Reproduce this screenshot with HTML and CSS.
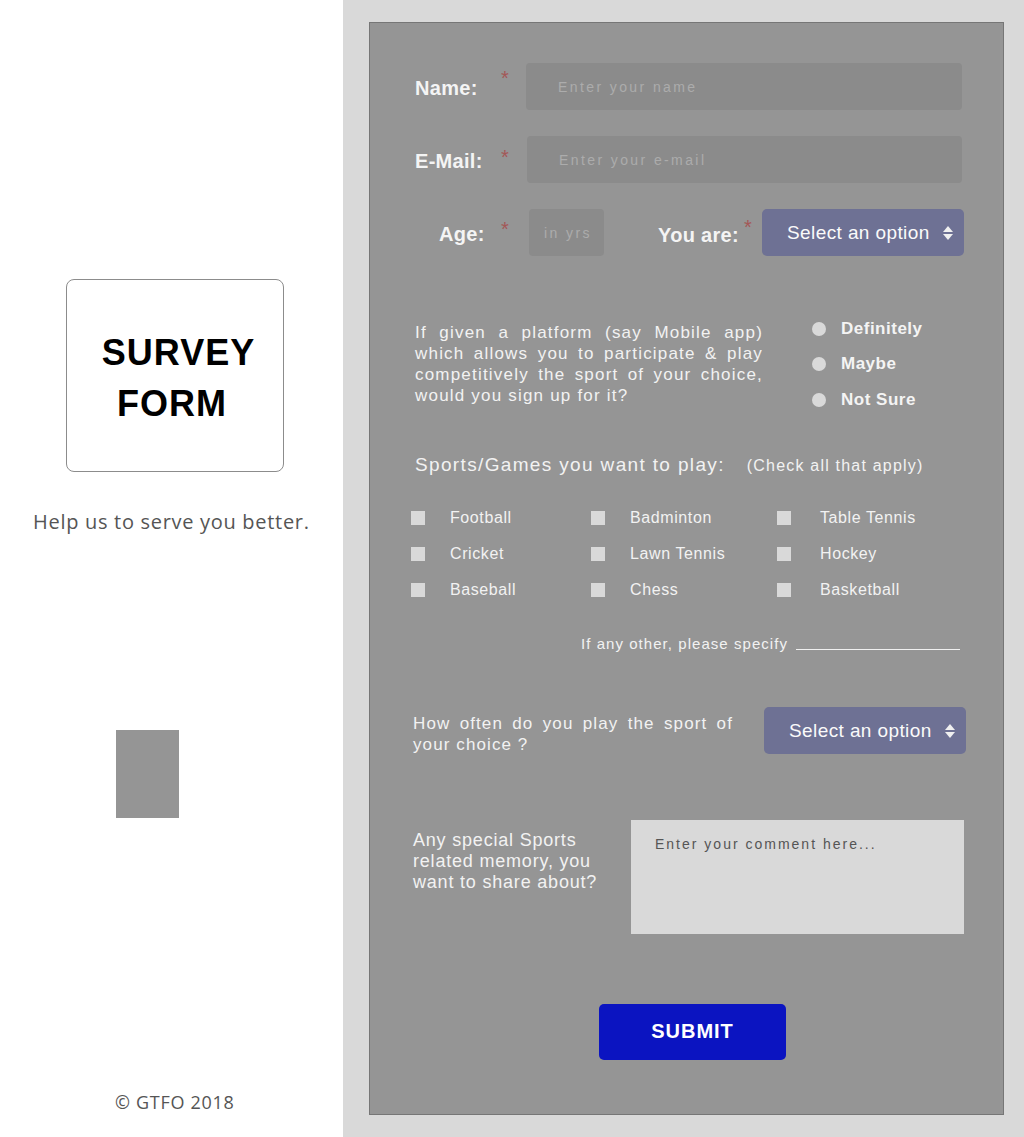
FILE: index.html
```html
<!DOCTYPE html>
<html lang="en">
<head>
<meta charset="utf-8">
<title>Survey Form</title>
<link rel="stylesheet" href="styles.css">
</head>
<body>
<div class="page">
  <aside class="side">
    <div class="title-box">
      <h1 class="title"><span class="t1">SURVEY</span><span class="t2">FORM</span></h1>
    </div>
    <p class="tagline">Help us to serve you better.</p>
    <div class="placeholder-img"></div>
    <p class="copy">© GTFO 2018</p>
  </aside>
  <main class="main">
    <form class="form">
      <div class="row row-name">
        <label class="lbl lbl-wide" for="name">Name:</label>
        <span class="star star-a">*</span>
        <input class="field field-name" id="name" type="text" placeholder="Enter your name">
      </div>
      <div class="row row-mail">
        <label class="lbl lbl-wide" for="email">E-Mail:</label>
        <span class="star star-a">*</span>
        <input class="field field-mail" id="email" type="email" placeholder="Enter your e-mail">
      </div>
      <div class="row row-age">
        <label class="lbl lbl-age" for="age">Age:</label>
        <span class="star star-b">*</span>
        <input class="field field-age" id="age" type="text" placeholder="in yrs">
        <label class="lbl lbl-you" for="you">You are:</label>
        <span class="star star-c">*</span>
        <div class="select-wrap">
          <select class="select" id="you"><option>Select an option</option></select>
          <span class="arrows"><span class="up"></span><span class="down"></span></span>
        </div>
      </div>

      <div class="question">
        <p class="qtext">If given a platform (say Mobile app) which allows you to participate &amp; play competitively the sport of your choice, would you sign up for it?</p>
        <div class="radios">
          <label class="radio"><input type="radio" name="signup"><span>Definitely</span></label>
          <label class="radio"><input type="radio" name="signup"><span>Maybe</span></label>
          <label class="radio"><input type="radio" name="signup"><span>Not Sure</span></label>
        </div>
      </div>

      <div class="sports-head">
        <span class="sh-main">Sports/Games you want to play:</span>
        <span class="sh-note">(Check all that apply)</span>
      </div>
      <div class="checks">
        <label class="check"><input type="checkbox"><span>Football</span></label>
        <label class="check"><input type="checkbox"><span>Badminton</span></label>
        <label class="check c3"><input type="checkbox"><span>Table Tennis</span></label>
        <label class="check"><input type="checkbox"><span>Cricket</span></label>
        <label class="check"><input type="checkbox"><span>Lawn Tennis</span></label>
        <label class="check c3"><input type="checkbox"><span>Hockey</span></label>
        <label class="check"><input type="checkbox"><span>Baseball</span></label>
        <label class="check"><input type="checkbox"><span>Chess</span></label>
        <label class="check c3"><input type="checkbox"><span>Basketball</span></label>
      </div>
      <div class="other">
        <label for="other">If any other, please specify</label>
        <input class="other-field" id="other" type="text">
      </div>

      <div class="freq">
        <p class="ftext">How often do you play the sport of your choice ?</p>
        <div class="select-wrap">
          <select class="select"><option>Select an option</option></select>
          <span class="arrows"><span class="up"></span><span class="down"></span></span>
        </div>
      </div>

      <div class="memory">
        <p class="mtext">Any special Sports related memory, you want to share about?</p>
        <textarea class="comment" placeholder="Enter your comment here..."></textarea>
      </div>

      <button class="submit" type="submit">SUBMIT</button>
    </form>
  </main>
</div>
</body>
</html>
```

FILE: styles.css
```css
* { box-sizing: border-box; }
html, body { margin: 0; padding: 0; }
body {
  font-family: "Liberation Sans", Arial, sans-serif;
  background: #ffffff;
}
.page {
  display: flex;
  width: 1024px;
  min-height: 1137px;
}
.side {
  width: 343px;
  flex: none;
  background: #ffffff;
  display: flex;
  flex-direction: column;
  align-items: flex-start;
  padding-top: 279px;
}
.title-box {
  margin-left: 66px;
  width: 218px;
  height: 193px;
  border: 1px solid #8c8c8c;
  border-radius: 8px;
  display: flex;
  align-items: center;
  justify-content: center;
}
.title {
  margin: 0;
  font-family: "Liberation Sans", Arial, sans-serif;
  font-weight: bold;
  font-size: 36px;
  line-height: 51px;
  letter-spacing: 1px;
  color: #000;
  text-align: center;
  display: flex;
  flex-direction: column;
  align-items: center;
  padding-top: 4px;
}
.t1 { margin-left: 7px; }
.t2 { margin-right: 6px; }
.tagline {
  margin: 37px 0 0 33px;
  font-family: "Open Sans", sans-serif;
  font-size: 20px;
  letter-spacing: 0.7px;
  line-height: 26px;
  color: #555;
}
.placeholder-img {
  margin: 195px 0 0 116px;
  width: 63px;
  height: 88px;
  background: #959595;
}
.copy {
  margin: 272px 0 0 115px;
  font-family: "Open Sans", sans-serif;
  font-size: 18px;
  letter-spacing: 0.7px;
  line-height: 24px;
  color: #555;
}

.main {
  flex: 1;
  background: #d9d9d9;
  padding: 22px 22px 22px 26px;
  display: flex;
}
.form {
  flex: 1;
  background: #959595;
  border: 1px solid #767676;
  padding: 40px 37px 0 45px;
  color: #f2f2f2;
}

.row {
  display: flex;
  align-items: center;
  height: 47px;
}
.row-mail { margin-top: 26px; }
.row-age { margin-top: 26px; }
.lbl {
  font-weight: bold;
  font-size: 20px;
  letter-spacing: 0.3px;
  color: #f4f4f4;
  padding-top: 4px;
}
.lbl-wide { width: 86px; }
.lbl-age { margin-left: 24px; width: 62px; }
.lbl-you { margin-left: 54px; width: 86px; padding-top: 6px; }
.star {
  align-self: flex-start;
  color: #a45757;
  font-size: 20px;
  line-height: 20px;
  margin-top: 6px;
}
.star-a { width: 25px; }
.star-b { width: 28px; margin-top: 10px; }
.star-c { width: 18px; margin-top: 8px; }
.row-name .star-a { margin-top: 5px; }
.row-mail .star-a { margin-top: 11px; width: 26px; }

.field {
  height: 47px;
  border: none;
  border-radius: 4px;
  background: #8b8b8b;
  padding: 0 0 0 32px;
  font-family: "Liberation Sans", Arial, sans-serif;
  font-size: 14px;
  letter-spacing: 2.4px;
  color: #eee;
  outline: none;
}
.field::placeholder { color: #acacac; }
.field-name { width: 436px; }
.field-mail { width: 435px; }
.field-age { width: 75px; padding-left: 15px; }

.select-wrap {
  position: relative;
  width: 202px;
  height: 47px;
  flex: none;
}
.select {
  appearance: none;
  -webkit-appearance: none;
  width: 100%;
  height: 100%;
  border: none;
  border-radius: 5px;
  background: #6e7194;
  color: #fafafa;
  font-family: "Liberation Sans", Arial, sans-serif;
  font-size: 19px;
  letter-spacing: 0.4px;
  padding: 0 0 0 25px;
  outline: none;
}
.arrows {
  position: absolute;
  right: 11px;
  top: 17px;
  display: flex;
  flex-direction: column;
  gap: 2px;
}
.up, .down {
  width: 0;
  height: 0;
  border-left: 5.5px solid transparent;
  border-right: 5.5px solid transparent;
}
.up { border-bottom: 6px solid #f0f0f0; }
.down { border-top: 6px solid #f0f0f0; }

.question {
  display: flex;
  align-items: flex-start;
  margin-top: 55px;
}
.qtext {
  margin: 11px 0 0 0;
  width: 348px;
  font-size: 17px;
  line-height: 21px;
  letter-spacing: 1.2px;
  text-align: justify;
  color: #f2f2f2;
}
.radios {
  margin-left: 49px;
  display: flex;
  flex-direction: column;
}
.radio {
  height: 35.5px;
  display: flex;
  align-items: center;
  font-weight: bold;
  font-size: 17px;
  letter-spacing: 0.5px;
  color: #f4f4f4;
}
.radio input {
  appearance: none;
  -webkit-appearance: none;
  margin: 0 15px 0 0;
  width: 14px;
  height: 14px;
  border-radius: 50%;
  background: #d9d9d9;
  border: none;
}

.sports-head {
  margin-top: 35px;
  display: flex;
  align-items: baseline;
  line-height: 24px;
}
.sh-main {
  font-size: 19px;
  letter-spacing: 1.35px;
  color: #f2f2f2;
}
.sh-note {
  margin-left: 22px;
  font-size: 16px;
  letter-spacing: 1.2px;
  color: #f2f2f2;
}
.checks {
  margin: 22px 0 0 -4px;
  display: grid;
  grid-template-columns: 180px 186px auto;
  grid-auto-rows: 36px;
}
.check {
  display: flex;
  align-items: center;
  font-size: 16px;
  letter-spacing: 0.6px;
  color: #f2f2f2;
}
.check input {
  appearance: none;
  -webkit-appearance: none;
  margin: 0 25px 0 0;
  width: 14px;
  height: 14px;
  background: #d9d9d9;
  border: none;
  border-radius: 0;
}
.check.c3 input { margin-right: 29px; }

.other {
  margin-top: 26px;
  display: flex;
  justify-content: flex-end;
  align-items: flex-end;
  padding-right: 6px;
  font-size: 15px;
  letter-spacing: 1.05px;
  line-height: 20px;
  color: #f2f2f2;
}
.other-field {
  margin: 0 0 4px 8px;
  width: 164px;
  height: 10px;
  border: none;
  border-bottom: 1px solid #f0f0f0;
  background: transparent;
  outline: none;
}

.freq {
  margin: 53px 0 0 -2px;
  display: flex;
  align-items: flex-start;
}
.ftext {
  margin: 6px 0 0 0;
  width: 320px;
  font-size: 17px;
  line-height: 21px;
  letter-spacing: 1.1px;
  text-align: justify;
  color: #f2f2f2;
}
.freq .select-wrap { margin-left: 31px; }

.memory {
  margin: 65px 0 0 -2px;
  display: flex;
  align-items: flex-start;
}
.mtext {
  margin: 10px 0 0 0;
  width: 200px;
  font-size: 18px;
  line-height: 21px;
  letter-spacing: 0.8px;
  color: #f2f2f2;
  flex: none;
}
.comment {
  margin-left: 18px;
  width: 333px;
  height: 114px;
  border: none;
  border-radius: 0;
  background: #d9d9d9;
  padding: 16px 24px;
  resize: none;
  font-family: "Liberation Sans", Arial, sans-serif;
  font-size: 14px;
  letter-spacing: 2px;
  color: #333;
  outline: none;
}
.comment::placeholder { color: #555; }

.submit {
  display: block;
  margin: 70px 0 0 184px;
  width: 187px;
  height: 56px;
  border: none;
  border-radius: 5px;
  background: #0b14c1;
  color: #fff;
  font-family: "Liberation Sans", Arial, sans-serif;
  font-weight: bold;
  font-size: 20px;
  letter-spacing: 1px;
  padding: 0;
}
```
